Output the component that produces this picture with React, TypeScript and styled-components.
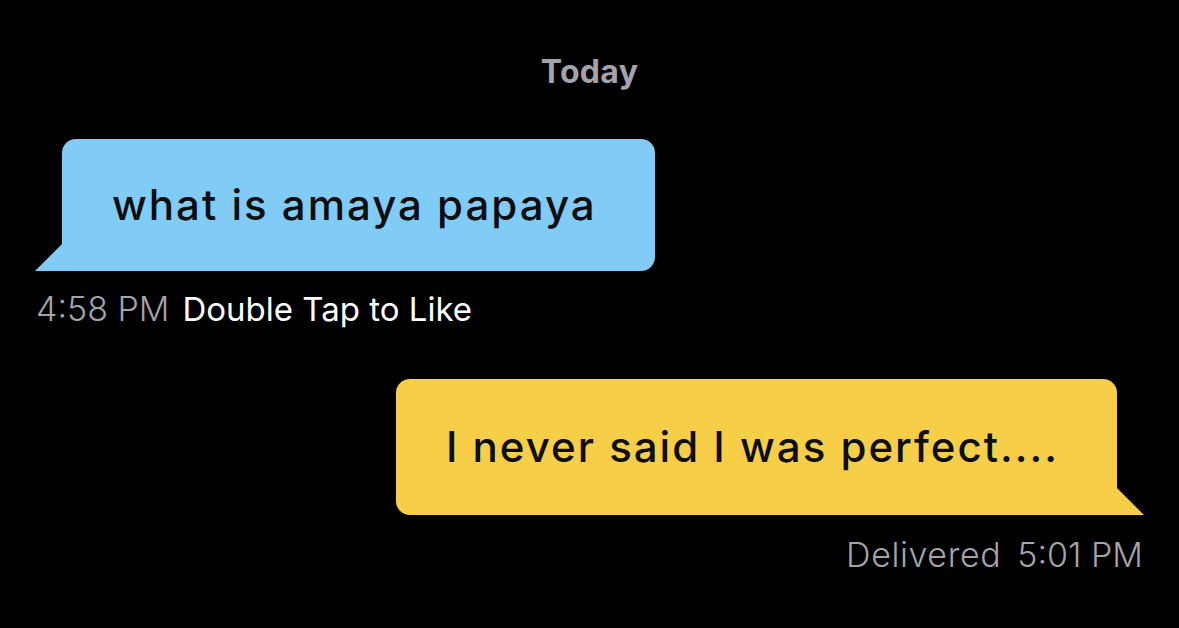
import React from "react";
import styled, { createGlobalStyle } from "styled-components";

const GlobalStyle = createGlobalStyle`
  html, body {
    margin: 0;
    padding: 0;
    background: #000;
  }
  body {
    font-family: Inter, "Noto Sans", sans-serif;
    -webkit-font-smoothing: antialiased;
  }
`;

const Screen = styled.div`
  width: 1179px;
  height: 628px;
  background: #000;
  display: flex;
  flex-direction: column;
  padding: 48px 36px 0 36px;
  box-sizing: border-box;
  overflow: hidden;
`;

const DayLabel = styled.div`
  text-align: center;
  color: #a3a3ab;
  font-weight: 700;
  font-size: 32px;
  line-height: 48px;
  letter-spacing: 0.3px;
`;

const Row = styled.div<{ $side: "left" | "right"; $top: number }>`
  display: flex;
  justify-content: ${(p) => (p.$side === "left" ? "flex-start" : "flex-end")};
  margin-top: ${(p) => p.$top}px;
`;

const Bubble = styled.div<{ $side: "left" | "right"; $color: string; $padY: number }>`
  position: relative;
  background: ${(p) => p.$color};
  color: #0d0d0d;
  font-size: 42px;
  font-weight: 500;
  line-height: 56px;
  letter-spacing: 2px;
  padding: ${(p) => p.$padY}px 58px ${(p) => p.$padY}px 50px;
  margin-${(p) => p.$side}: 26px;
  border-radius: ${(p) => (p.$side === "left" ? "14px 14px 14px 0" : "14px 14px 0 14px")};

  &::after {
    content: "";
    position: absolute;
    bottom: 0;
    ${(p) => p.$side}: -27px;
    width: 27px;
    height: 27px;
    background: ${(p) => p.$color};
    clip-path: ${(p) =>
      p.$side === "left"
        ? "polygon(100% 0, 100% 100%, 0 100%)"
        : "polygon(0 0, 100% 100%, 0 100%)"};
  }
`;

const Meta = styled.div<{ $side: "left" | "right" }>`
  display: flex;
  justify-content: ${(p) => (p.$side === "left" ? "flex-start" : "flex-end")};
  gap: ${(p) => (p.$side === "left" ? 13 : 16)}px;
  font-size: 34px;
  line-height: 48px;
  font-weight: 300;
  margin-top: ${(p) => (p.$side === "left" ? 14 : 16)}px;
`;

const Time = styled.span`
  color: #a3a3ab;
`;

const Hint = styled.span<{ $muted?: boolean }>`
  color: ${(p) => (p.$muted ? "#a3a3ab" : "#ffffff")};
  font-weight: ${(p) => (p.$muted ? 300 : 400)};
  font-size: ${(p) => (p.$muted ? 34 : 33)}px;
  letter-spacing: ${(p) => (p.$muted ? 0.6 : 0)}px;
`;

export default function App() {
  return (
    <>
      <GlobalStyle />
      <Screen>
        <DayLabel>Today</DayLabel>
        <Row $side="left" $top={43}>
          <Bubble $side="left" $color="#80ccf6" $padY={38}>
            what is amaya papaya
          </Bubble>
        </Row>
        <Meta $side="left">
          <Time>4:58 PM</Time>
          <Hint>Double Tap to Like</Hint>
        </Meta>
        <Row $side="right" $top={46}>
          <Bubble $side="right" $color="#f6ce48" $padY={40}>
            I never said I was perfect....
          </Bubble>
        </Row>
        <Meta $side="right">
          <Hint $muted>Delivered</Hint>
          <Time>5:01 PM</Time>
        </Meta>
      </Screen>
    </>
  );
}
